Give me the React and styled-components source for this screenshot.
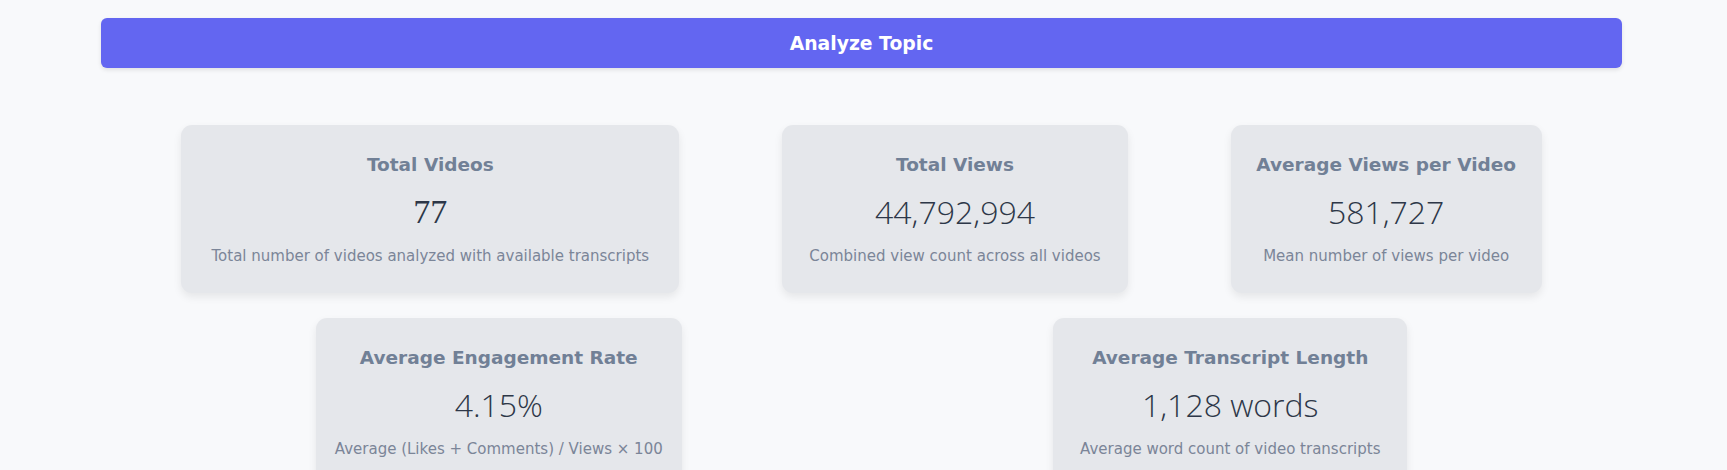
import React from "react";
import styled, { createGlobalStyle } from "styled-components";

const Global = createGlobalStyle`
  html, body { margin: 0; padding: 0; background: #f8f9fb; }
  body { font-family: "DejaVu Sans", "Noto Sans", sans-serif; }
  * { box-sizing: border-box; }
`;

const Page = styled.div`
  width: 1521px;
  margin-left: 101px;
  padding-top: 18px;
`;

const AnalyzeButton = styled.button`
  display: flex;
  align-items: center;
  justify-content: center;
  width: 100%;
  height: 50px;
  border: none;
  border-radius: 6px;
  background: #6366f1;
  color: #ffffff;
  font-family: "DejaVu Sans", sans-serif;
  font-weight: 700;
  font-size: 18.8px;
  box-shadow: 0 2px 4px rgba(0, 0, 0, 0.1);
  cursor: pointer;
`;

const Stats = styled.div`
  display: flex;
  flex-wrap: wrap;
  justify-content: space-around;
  row-gap: 25px;
  margin-top: 57px;
  padding: 0 29px;
`;

const Card = styled.div`
  width: ${(p) => p.$w}px;
  height: 168px;
  padding: 27px 16px 0;
  border-radius: 11px;
  background: #e5e7eb;
  box-shadow: 0 4px 8px rgba(0, 0, 0, 0.08);
  display: flex;
  flex-direction: column;
  align-items: center;
  text-align: center;
`;

const Title = styled.div`
  font-size: 18.5px;
  font-weight: 700;
  line-height: 26px;
  color: #718096;
  white-space: nowrap;
`;

const Value = styled.div`
  margin-top: 16px;
  font-family: ${(p) => (p.$serif ? '"Liberation Serif", serif' : '"Open Sans", sans-serif')};
  font-size: ${(p) => (p.$serif ? 34 : 32)}px;
  font-weight: ${(p) => (p.$serif ? 400 : 300)};
  line-height: 36px;
  color: #2d3748;
  white-space: nowrap;
`;

const Desc = styled.div`
  margin-top: 16px;
  font-size: 15px;
  line-height: 20px;
  color: #7b8598;
  white-space: nowrap;
`;

const stats = [
  { title: "Total Videos", value: "77", desc: "Total number of videos analyzed with available transcripts", w: 498, serif: true },
  { title: "Total Views", value: "44,792,994", desc: "Combined view count across all videos", w: 346 },
  { title: "Average Views per Video", value: "581,727", desc: "Mean number of views per video", w: 311 },
  { title: "Average Engagement Rate", value: "4.15%", desc: "Average (Likes + Comments) / Views × 100", w: 366 },
  { title: "Average Transcript Length", value: "1,128 words", desc: "Average word count of video transcripts", w: 354 },
];

export default function App() {
  return (
    <>
      <Global />
      <Page>
        <AnalyzeButton>Analyze Topic</AnalyzeButton>
        <Stats>
          {stats.map((s) => (
            <Card key={s.title} $w={s.w}>
              <Title>{s.title}</Title>
              <Value $serif={s.serif}>{s.value}</Value>
              <Desc>{s.desc}</Desc>
            </Card>
          ))}
        </Stats>
      </Page>
    </>
  );
}
